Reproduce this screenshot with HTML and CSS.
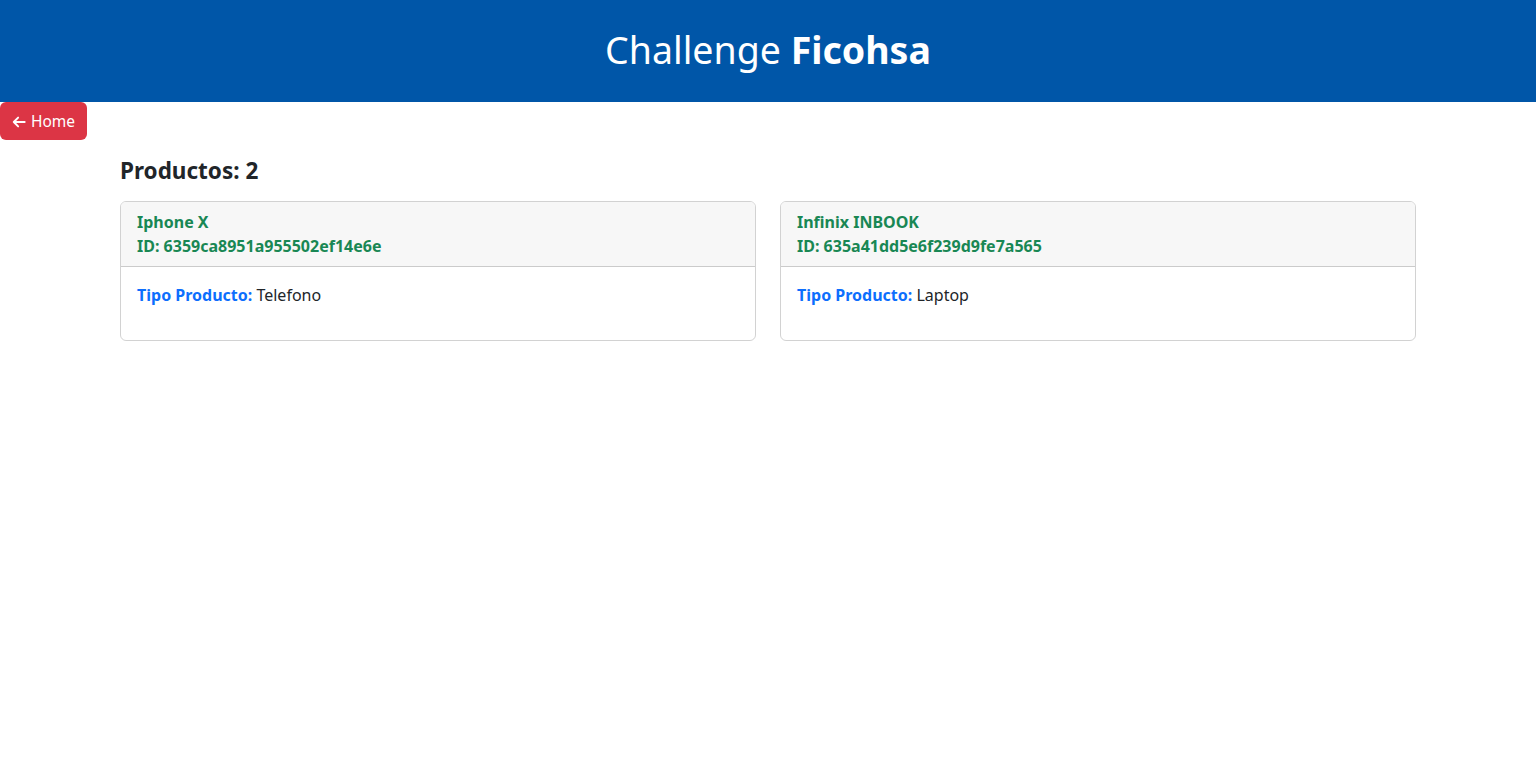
FILE: index.html
```html
<!DOCTYPE html>
<html lang="es">
<head>
<meta charset="utf-8">
<title>Challenge Ficohsa</title>
<link rel="stylesheet" href="styles.css">
</head>
<body>
<header class="topbar">
  <h1 class="title">Challenge <b>Ficohsa</b></h1>
</header>
<a class="btn-home" href="#">
  <svg class="arrow" viewBox="0 0 16 16" width="14" height="14" aria-hidden="true"><path fill="none" stroke="currentColor" stroke-width="2.2" stroke-linecap="round" stroke-linejoin="round" d="M14.5 8H2M7 3 2 8l5 5"/></svg>
  <span>Home</span>
</a>
<main class="container">
  <h4 class="count">Productos: 2</h4>
  <div class="grid">
    <div class="card">
      <div class="card-header">
        <div>Iphone X</div>
        <div>ID: 6359ca8951a955502ef14e6e</div>
      </div>
      <div class="card-body">
        <p><b class="label">Tipo Producto:</b> Telefono</p>
      </div>
    </div>
    <div class="card">
      <div class="card-header">
        <div>Infinix INBOOK</div>
        <div>ID: 635a41dd5e6f239d9fe7a565</div>
      </div>
      <div class="card-body">
        <p><b class="label">Tipo Producto:</b> Laptop</p>
      </div>
    </div>
  </div>
</main>
</body>
</html>
```

FILE: styles.css
```css
* { box-sizing: border-box; }
body {
  margin: 0;
  font-family: "Noto Sans", "Open Sans", sans-serif;
  font-size: 16px;
  line-height: 1.5;
  color: #212529;
  background: #fff;
}
.topbar {
  height: 102px;
  padding-bottom: 4px;
  background: #0056a8;
  display: flex;
  align-items: center;
  justify-content: center;
}
.title {
  margin: 0;
  color: #fff;
  font-size: 37.5px;
  font-weight: 400;
  line-height: 1.2;
}
.title b { font-weight: 700; }
.btn-home {
  display: inline-flex;
  align-items: center;
  gap: 5px;
  height: 38px;
  padding: 2px 12px 0;
  background: #dc3545;
  color: #fff;
  text-decoration: none;
  border-radius: 6px;
  font-size: 15.5px;
}
.arrow { display: block; }
.container {
  width: 1320px;
  margin: 0 auto;
  padding: 0 12px;
}
.count {
  margin: 17px 0 0;
  font-size: 22.5px;
  font-weight: 700;
  line-height: 1.2;
}
.grid {
  margin-top: 17px;
  display: grid;
  grid-template-columns: 1fr 1fr;
  gap: 24px;
}
.card {
  border: 1px solid rgba(0,0,0,0.176);
  border-radius: 6px;
  overflow: hidden;
}
.card-header {
  padding: 8px 16px;
  background: #f7f7f7;
  border-bottom: 1px solid rgba(0,0,0,0.176);
  color: #198754;
  font-weight: 700;
}
.card-body { padding: 16px 16px 17px; }
.card-body p { margin: 0 0 16px; }
.label { color: #0d6efd; }
```
